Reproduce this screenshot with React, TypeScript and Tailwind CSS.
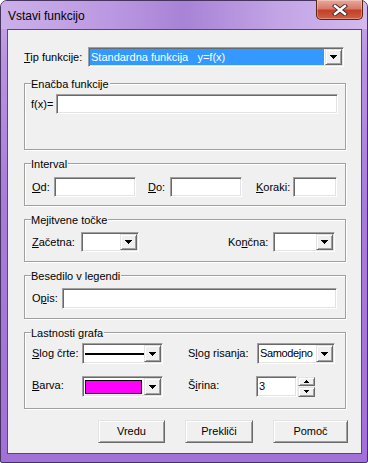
import React from "react";

const SUNKEN =
  "bg-white border border-t-[#a0a0a0] border-l-[#a0a0a0] border-r-white border-b-white shadow-[inset_1px_1px_0_#696969,inset_-1px_-1px_0_#e3e3e3]";
const RAISED =
  "bg-[#f0f0f0] border border-t-[#e3e3e3] border-l-[#e3e3e3] border-r-[#696969] border-b-[#696969] shadow-[inset_1px_1px_0_#fff,inset_-1px_-1px_0_#a0a0a0]";

const DownArrow = () => (
  <svg width="7" height="4" viewBox="0 0 7 4" shapeRendering="crispEdges">
    <rect x="0" y="0" width="7" height="1" />
    <rect x="1" y="1" width="5" height="1" />
    <rect x="2" y="2" width="3" height="1" />
    <rect x="3" y="3" width="1" height="1" />
  </svg>
);

const SmallArrow = ({ up }: { up?: boolean }) => (
  <svg width="5" height="3" viewBox="0 0 5 3" shapeRendering="crispEdges">
    {up ? (
      <>
        <rect x="2" y="0" width="1" height="1" />
        <rect x="1" y="1" width="3" height="1" />
        <rect x="0" y="2" width="5" height="1" />
      </>
    ) : (
      <>
        <rect x="0" y="0" width="5" height="1" />
        <rect x="1" y="1" width="3" height="1" />
        <rect x="2" y="2" width="1" height="1" />
      </>
    )}
  </svg>
);

function Combo({ className, children }: { className: string; children?: React.ReactNode }) {
  return (
    <div className={`${SUNKEN} flex p-[1px] ${className}`}>
      <div className="flex-1 min-w-0 flex items-center overflow-hidden">{children}</div>
      <div className={`${RAISED} w-[17px] flex items-center justify-center`}>
        <DownArrow />
      </div>
    </div>
  );
}

function Field({ className }: { className: string }) {
  return <div className={`${SUNKEN} ${className}`} />;
}

function Group({
  title,
  className,
  children,
}: {
  title: string;
  className: string;
  children?: React.ReactNode;
}) {
  return (
    <div
      className={`ml-[16px] w-[322px] border border-[#a0a0a0] shadow-[inset_1px_1px_0_#fff,1px_1px_0_#fff] ${className}`}
    >
      <div className="-mt-[7px] ml-[6px] w-fit bg-[#f0f0f0] pr-[1px] leading-[14px]">{title}</div>
      {children}
    </div>
  );
}

function PushButton({ label, className }: { label: string; className: string }) {
  return (
    <div className={`${RAISED} h-[23px] flex items-center justify-center ${className}`}>{label}</div>
  );
}

export default function App() {
  return (
    <div className="w-[368px] h-[463px] font-['Liberation_Sans',Arial,sans-serif] text-[11px] text-black">
      <div className="w-[368px] h-[463px] rounded-t-[7px] rounded-b-[2px] border border-[#47335f] bg-[linear-gradient(180deg,#c9aae8_0px,#b993e2_60px,#a87cdb_200px,#a271d8_100%)] flex flex-col">
        {/* title bar */}
        <div className="h-[28px] flex items-start rounded-t-[6px] bg-[linear-gradient(90deg,#cbb0e9_0%,#bb98e2_30%,#a883d6_50%,#c2a3e5_75%,#d2b9ee_100%)]">
          <div className="mt-[7px] ml-[7px] text-[12px] leading-[16px]">Vstavi funkcijo</div>
          <div className="ml-auto mr-[4px] -mt-[1px] w-[47px] h-[20px] rounded-b-[5px] border border-t-0 border-[#5a2418] bg-[linear-gradient(180deg,#e9a99b_0%,#d77a68_45%,#c2402a_55%,#d2603f_100%)] shadow-[inset_0_0_0_1px_rgba(255,255,255,0.3)] flex items-center justify-center">
            <svg width="16" height="12" viewBox="0 0 16 12">
              <path d="M3 2 L13 10 M13 2 L3 10" stroke="#3b2a2a" strokeWidth="4.2" strokeLinecap="square" />
              <path d="M3 2 L13 10 M13 2 L3 10" stroke="#fff" strokeWidth="2.4" strokeLinecap="square" />
            </svg>
          </div>
        </div>

        {/* client area */}
        <div className="ml-[6px] w-[355px] h-[425px] border border-[#5b4870] bg-[#f0f0f0] flex flex-col">
          <div className="mt-[17px] ml-[16px] flex items-center h-[20px]">
            <span className="w-[64px]">
              <u>T</u>ip funkcije:
            </span>
            <Combo className="w-[256px] h-[20px]">
              <div className="self-stretch flex-1 mr-[1px] bg-[#3399ff] text-white pl-[1px] flex items-center whitespace-pre">
                Standardna funkcija   y=f(x)
              </div>
            </Combo>
          </div>

          <Group title="Enačba funkcije" className="mt-[16px] h-[67px]">
            <div className="mt-[3px] pl-[6px] flex items-center">
              <span className="w-[25px]">f(x)=</span>
              <Field className="w-[282px] h-[20px]" />
            </div>
          </Group>

          <Group title="Interval" className="mt-[13px] h-[43px]">
            <div className="mt-[6px] pl-[7px] flex items-center">
              <span className="w-[22px]">
                <u>O</u>d:
              </span>
              <Field className="w-[82px] h-[20px]" />
              <span className="ml-[12px] w-[22px]">
                <u>D</u>o:
              </span>
              <Field className="w-[72px] h-[20px]" />
              <span className="ml-[14px] w-[37px]">
                <u>K</u>oraki:
              </span>
              <Field className="w-[44px] h-[20px]" />
            </div>
          </Group>

          <Group title="Mejitvene točke" className="mt-[13px] h-[43px]">
            <div className="mt-[5px] pl-[7px] flex items-center">
              <span className="w-[49px]">
                <u>Z</u>ačetna:
              </span>
              <Combo className="w-[58px] h-[20px]" />
              <span className="ml-[89px] w-[45px]">
                Ko<u>n</u>čna:
              </span>
              <Combo className="w-[62px] h-[20px]" />
            </div>
          </Group>

          <Group title="Besedilo v legendi" className="mt-[13px] h-[44px]">
            <div className="mt-[5px] pl-[7px] flex items-center">
              <span className="w-[30px]">
                O<u>p</u>is:
              </span>
              <Field className="w-[275px] h-[21px]" />
            </div>
          </Group>

          <Group title="Lastnosti grafa" className="mt-[13px] h-[77px]">
            <div className="mt-[3px] pl-[7px] flex items-center h-[21px]">
              <span className="w-[50px]">
                <u>S</u>log črte:
              </span>
              <Combo className="w-[81px] h-[21px]">
                <div className="ml-[1px] flex-1 h-[2px] bg-black" />
              </Combo>
              <span className="ml-[25px] w-[69px]">
                S<u>l</u>og risanja:
              </span>
              <Combo className="w-[78px] h-[21px]">
                <span className="pl-[1px] tracking-[-0.35px] whitespace-nowrap">Samodejno</span>
              </Combo>
            </div>
            <div className="mt-[12px] pl-[7px] flex items-center h-[21px]">
              <span className="w-[50px] -mt-[2px]">
                <u>B</u>arva:
              </span>
              <Combo className="w-[81px] h-[21px]">
                <div className="ml-[1px] w-[57px] h-[14px] border border-black bg-[#ff00ff]" />
              </Combo>
              <span className="ml-[25px] w-[68px] -mt-[2px]">
                Š<u>i</u>rina:
              </span>
              <div className={`${SUNKEN} w-[41px] h-[21px] pl-[2px] pt-[1px] leading-[16px]`}>3</div>
              <div className="ml-[1px] w-[17px] flex flex-col gap-[1px]">
                <div className={`${RAISED} h-[9px] flex items-center justify-center`}>
                  <SmallArrow up />
                </div>
                <div className={`${RAISED} h-[10px] flex items-center justify-center`}>
                  <SmallArrow />
                </div>
              </div>
            </div>
          </Group>

          <div className="mt-[11px] pl-[90px] flex">
            <PushButton label="Vredu" className="w-[67px]" />
            <PushButton label="Prekliči" className="ml-[20px] w-[68px]" />
            <PushButton label="Pomoč" className="ml-[20px] w-[75px]" />
          </div>
        </div>
      </div>
    </div>
  );
}
